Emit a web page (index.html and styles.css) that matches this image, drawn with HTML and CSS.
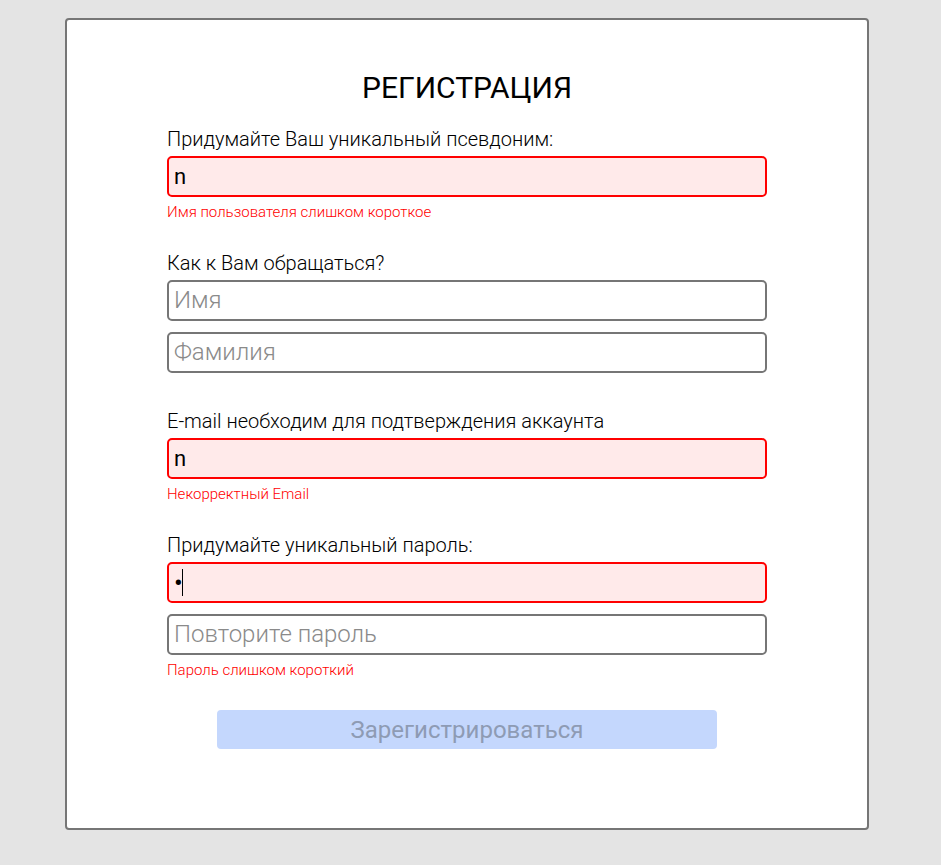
FILE: index.html
```html
<!DOCTYPE html>
<html lang="ru">
<head>
<meta charset="utf-8">
<title>Регистрация</title>
<link rel="stylesheet" href="styles.css">
</head>
<body>
<div class="card">
  <form class="form">
    <h1 class="title">РЕГИСТРАЦИЯ</h1>

    <label class="label">Придумайте Ваш уникальный псевдоним:</label>
    <input class="field field-error" type="text" value="n">
    <div class="error">Имя пользователя слишком короткое</div>

    <label class="label label-gap">Как к Вам обращаться?</label>
    <input class="field" type="text" placeholder="Имя">
    <input class="field field-next" type="text" placeholder="Фамилия">

    <label class="label label-gap-plain">E-mail необходим для подтверждения аккаунта</label>
    <input class="field field-error" type="text" value="n">
    <div class="error">Некорректный Email</div>

    <label class="label label-gap">Придумайте уникальный пароль:</label>
    <div class="field-wrap">
      <input class="field field-error field-password" type="password" value="n">
      <span class="caret"></span>
    </div>
    <input class="field field-next" type="password" placeholder="Повторите пароль">
    <div class="error">Пароль слишком короткий</div>

    <div class="actions">
      <button class="submit" type="button" disabled>Зарегистрироваться</button>
    </div>
  </form>
</div>
</body>
</html>
```

FILE: styles.css
```css
html, body {
  margin: 0;
  padding: 0;
  background: #e4e4e4;
  font-family: Roboto, "Noto Sans", "Liberation Sans", sans-serif;
}

.card {
  box-sizing: border-box;
  width: 804px;
  height: 812px;
  margin: 18px 0 0 65px;
  background: #ffffff;
  border: 2px solid #767676;
  border-radius: 4px;
}

.form {
  width: 600px;
  margin: 0 auto;
  padding-top: 50px;
  display: flex;
  flex-direction: column;
}

.title {
  margin: 0;
  font-size: 30px;
  line-height: 36px;
  font-weight: 400;
  text-align: center;
  color: #000;
}

.label {
  display: block;
  margin-top: 22px;
  margin-bottom: 6px;
  font-size: 20px;
  line-height: 22px;
  font-weight: 300;
  color: #000;
}

.label-gap {
  margin-top: 32px;
}

.label-gap-plain {
  margin-top: 37px;
}

.field {
  box-sizing: border-box;
  width: 600px;
  height: 41px;
  margin: 0;
  padding: 0 5px;
  border: 2px solid #767676;
  border-radius: 5px;
  background: #ffffff;
  font-family: Roboto, "Noto Sans", "Liberation Sans", sans-serif;
  font-size: 22px;
  font-weight: 400;
  color: #000;
  outline: none;
  display: block;
}

.field::placeholder {
  color: #8a8a8a;
  font-weight: 300;
  font-size: 24px;
}

.field-next {
  margin-top: 11px;
}

.field-error {
  border-color: #ff0000;
  background: #ffeaea;
}

.field-wrap {
  position: relative;
}

.field-password {
  font-size: 26px;
}

.caret {
  position: absolute;
  left: 15px;
  top: 7px;
  width: 1px;
  height: 27px;
  background: #000;
}

.error {
  margin-top: 7px;
  font-size: 15px;
  line-height: 16px;
  font-weight: 300;
  color: #ff0000;
}

.actions {
  display: flex;
  justify-content: center;
  margin-top: 32px;
}

.submit {
  width: 500px;
  height: 39px;
  border: none;
  border-radius: 4px;
  background: #c4d7fd;
  color: #8e9bb4;
  font-family: Roboto, "Noto Sans", "Liberation Sans", sans-serif;
  font-size: 24px;
  font-weight: 400;
}
```
